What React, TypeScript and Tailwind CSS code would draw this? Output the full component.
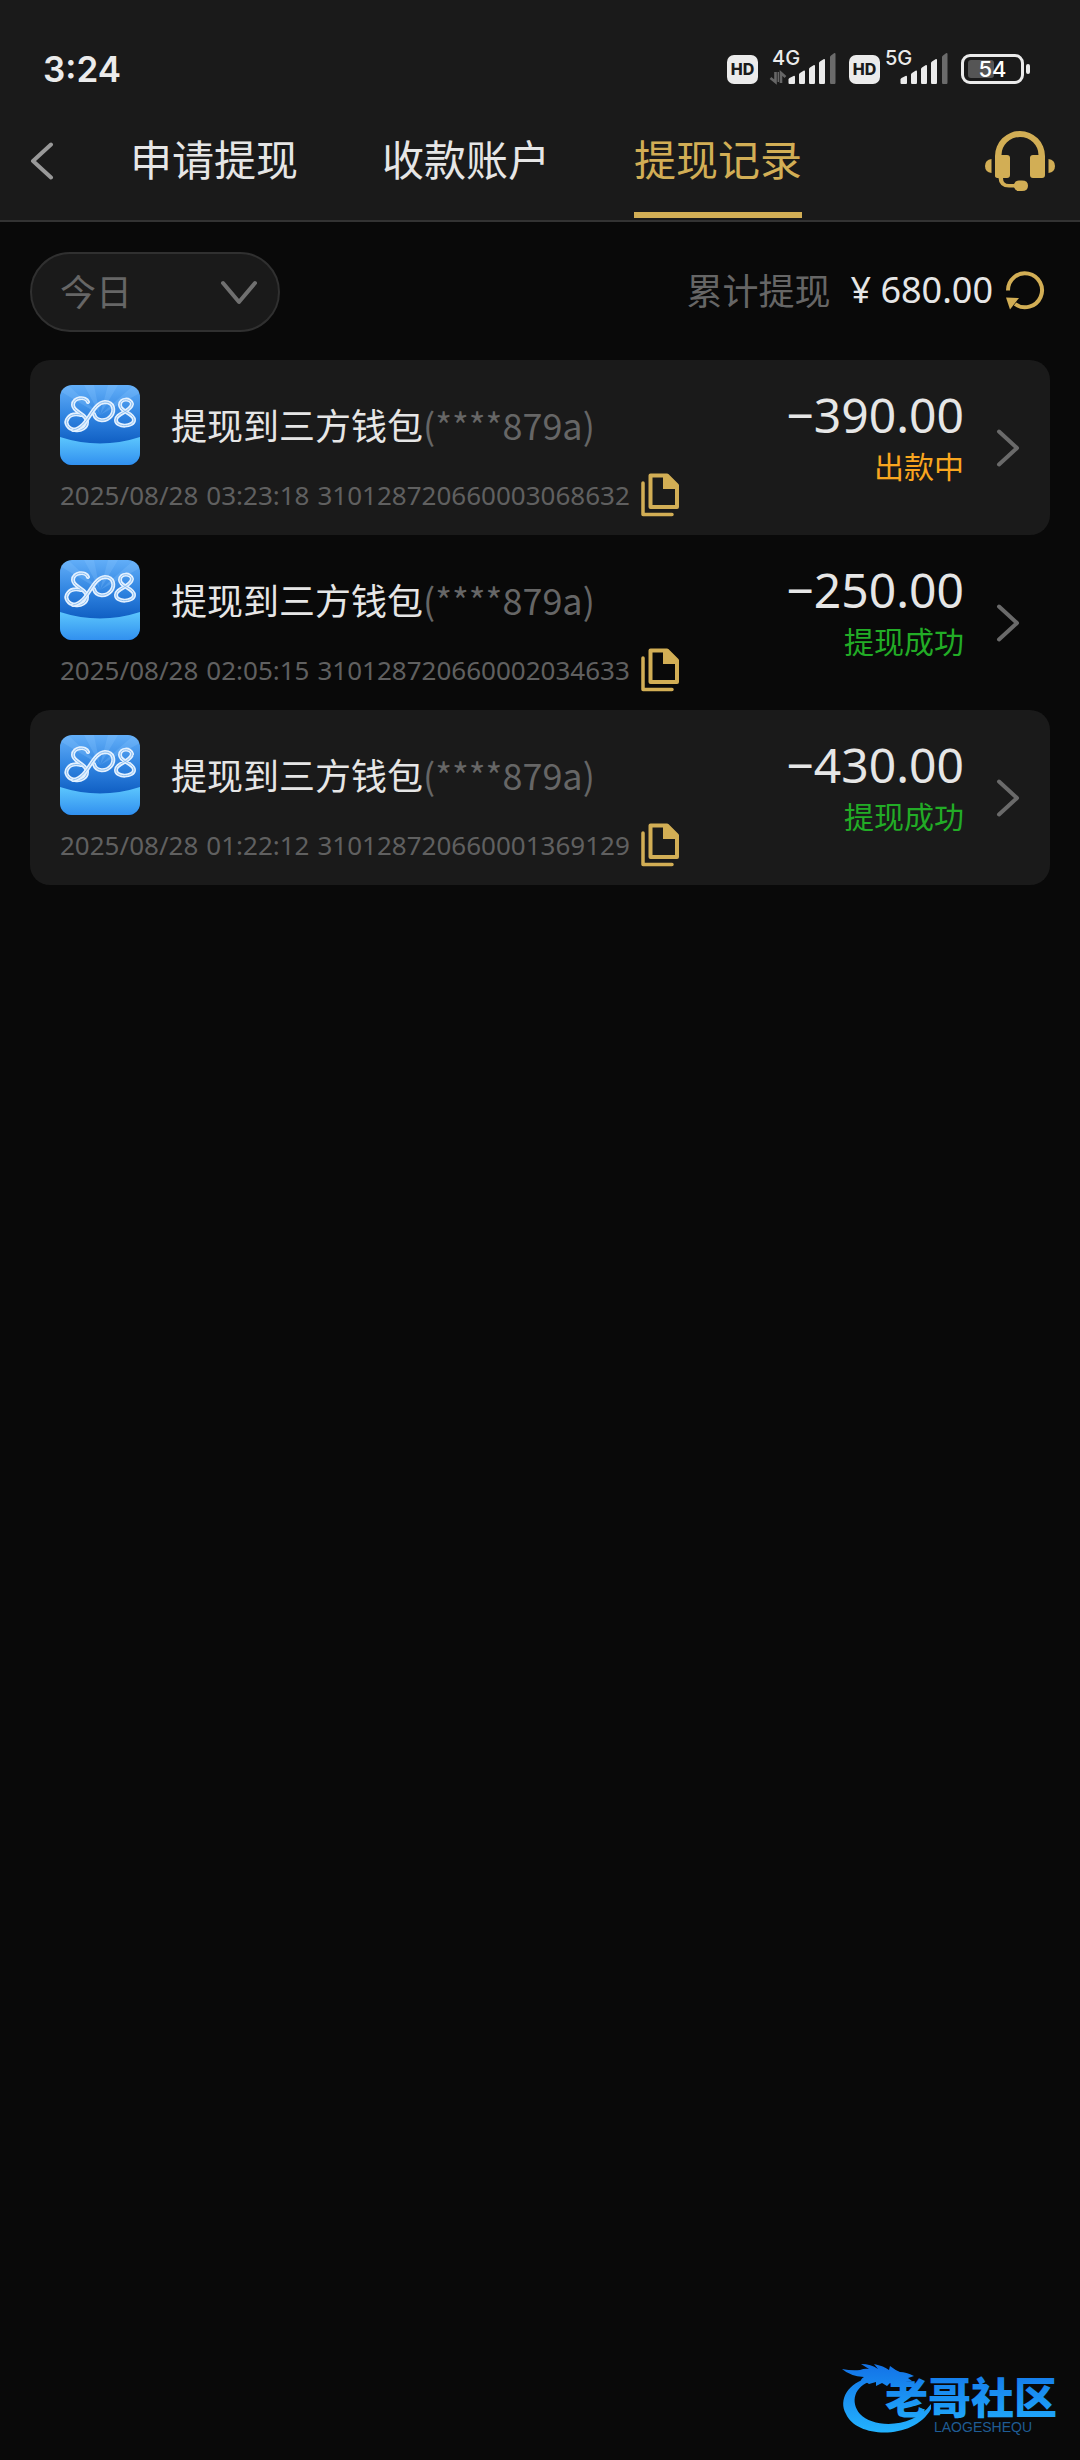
import { useState } from "react";

const cjk = "font-['Noto_Sans_CJK_SC',sans-serif]";
const latin = "font-['Noto_Sans','Noto_Sans_CJK_SC',sans-serif]";

type RecordItem = {
  date: string;
  time: string;
  order: string;
  amount: string;
  status: string;
  pending: boolean;
};

const records: RecordItem[] = [
  { date: "2025/08/28", time: "03:23:18", order: "310128720660003068632", amount: "−390.00", status: "出款中", pending: true },
  { date: "2025/08/28", time: "02:05:15", order: "310128720660002034633", amount: "−250.00", status: "提现成功", pending: false },
  { date: "2025/08/28", time: "01:22:12", order: "310128720660001369129", amount: "−430.00", status: "提现成功", pending: false },
];

const tabs = ["申请提现", "收款账户", "提现记录"];

function HdBadge() {
  return (
    <span className="flex h-[29px] w-[31px] items-center justify-center rounded-[7px] bg-[#ebebeb] font-[Inter,sans-serif] text-[16px] font-extrabold text-[#1a1a1a]">
      HD
    </span>
  );
}

function Signal({ label, arrows }: { label: string; arrows?: boolean }) {
  return (
    <svg className="overflow-visible" width="67" height="36" viewBox="0 0 67 36" aria-label={label}>
      <text x={arrows ? 2 : 3} y="17" fill="#ebebeb" fontSize="20" fontWeight="500" fontFamily="Inter, sans-serif">
        {label}
      </text>
      {arrows && (
        <g stroke="#666" strokeWidth="2.6" fill="none">
          <path d="M5.5 24v10L0.5 30M11 35V25l4.5 4" />
          <path d="M8.3 24v10" strokeWidth="1.5" />
        </g>
      )}
      <g fill="#ebebeb">
        <path d="M18.500 34.500v-3q0-1 1-1.500l4-2q1.500-.6 1.500 1v6q0 1-1 1h-4.500q-1 0-1-1z" />
        <path d="M29 34.500v-8q0-1 1-1.600l3.500-2.200q1.500-.8 1.500 1V34.500q0 1.500-1 1.500h-4q-1 0-1-1.500z" />
        <path d="M39 34.500V21q0-1 1-1.600l3.500-2.200q1.500-.8 1.500 1V34.500q0 1.500-1 1.500h-4q-1 0-1-1.500z" />
        <path d="M49 34.500V15q0-1 1-1.600l3.500-2.200q1.500-.8 1.500 1V34.500q0 1.500-1 1.500h-4q-1 0-1-1.500z" />
      </g>
      <path fill="#6b6b6b" d="M60 34.500V9q0-1 1-1.600l3-2.200q1.500-.8 1.500 1V34.500q0 1.500-1 1.500H61q-1 0-1-1.500z" />
    </svg>
  );
}

function Battery() {
  return (
    <div className="flex items-center gap-[2px]">
      <div className="relative flex h-[30px] w-[63px] items-center justify-center rounded-[9px] border-[3px] border-[#ebebeb]">
        <span className="absolute left-[4px] h-[18px] w-[26px] rounded-[3px] bg-[#555]" />
        <span className="relative font-[Inter,sans-serif] text-[22px] leading-[24px] font-medium text-white">54</span>
      </div>
      <span className="h-[10px] w-[4px] rounded-full bg-[#ebebeb]" />
    </div>
  );
}

function Headset() {
  return (
    <svg width="70" height="60" viewBox="0 0 70 60" fill="#d2ae55" aria-hidden="true">
      <path d="M10 45V25a25 25 0 0 1 50 0v19q0 3-3 3H48q-3 0-3-3V27q0-3 3-3h5.500a18.500 18 0 0 0-37 0H22q3 0 3 3v17q0 3-3 3h-4q0 6 6 6h5q1.500-3.500 5-3.500h3q6 0 6 5.200T37 60h-3q-3.500 0-5-3.500h-5Q14 56.500 13.500 47 10 47 10 45z" />
      <path d="M6.500 28v14Q0 41 0 35t6.500-7zM63.500 28v14Q70 41 70 35t-6.500-7z" />
    </svg>
  );
}

function Refresh() {
  return (
    <svg width="40" height="40" viewBox="0 0 40 40" aria-hidden="true">
      <path d="M3 20.500A17 17 0 1 1 10 34" fill="none" stroke="#d2ae55" strokeWidth="4" />
      <path d="M1 27.500l13 .5-9 11.500z" fill="#d2ae55" />
    </svg>
  );
}

function CopyIcon() {
  return (
    <svg width="40" height="44" viewBox="0 0 40 44" aria-hidden="true">
      <path d="M3 10v31.500h29" fill="none" stroke="#d2ae55" strokeWidth="3.500" strokeLinecap="round" strokeLinejoin="round" />
      <path d="M10.500 2.500H27l10 10V34H10.500z" fill="none" stroke="#d2ae55" strokeWidth="4" strokeLinejoin="round" />
      <path d="M23 2h5l10 11v3H23z" fill="#d2ae55" />
    </svg>
  );
}

function Chevron({ left }: { left?: boolean }) {
  return (
    <svg width="24" height="38" viewBox="0 0 24 38" fill="none" aria-hidden="true">
      <path
        d={left ? "M21 2.500L3 19l18 16.500" : "M3 2.500L21 19 3 35.500"}
        stroke={left ? "#999" : "#6a6a6a"}
        strokeWidth="4"
        strokeLinecap="round"
        strokeLinejoin="round"
      />
    </svg>
  );
}

const ribbons = [
  "M28 17C26 11 13 12 13 20C13 27 27 29 27 37C27 43 21 46 15 45C8 44 4 38 8 33C11 29 17 29 21 30",
  "M13 45C29 43 31 18 45 17C54 17 55 26 51 31C46 37 36 37 34 29",
  "M72 19C71 13 60 13 60 20C60 27 74 28 74 35C74 42 56 43 56 35C56 28 71 27 72 19",
];

function WalletLogo() {
  return (
    <svg className="shrink-0 rounded-[12px]" width="80" height="80" viewBox="0 0 80 80" aria-label="808">
      <defs>
        <linearGradient id="sky" x1="0" y1="0" x2="0" y2="1">
          <stop offset="0" stopColor="#62aef8" />
          <stop offset=".4" stopColor="#2f83e0" />
          <stop offset=".72" stopColor="#1160c4" />
        </linearGradient>
        <linearGradient id="sea" x1="0" y1="0" x2="0" y2="1">
          <stop offset="0" stopColor="#5cc6fd" />
          <stop offset="1" stopColor="#3190ef" />
        </linearGradient>
      </defs>
      <rect width="80" height="80" fill="url(#sky)" />
      <path d="M40 30L0 6V0h8zM40 30L24 0h10zM40 30L48 0h10zM40 30L74 0h6v8z" fill="#8cc6ff" opacity=".25" />
      <path d="M0 52q40 13 80 0v28H0z" fill="url(#sea)" />
      <g fill="none" strokeLinecap="round">
        {ribbons.map((d) => (
          <g key={d}>
            <path d={d} stroke="#e4f1ff" strokeWidth="4" />
            <path d={d} stroke="#8dbff0" strokeWidth="1" />
          </g>
        ))}
      </g>
    </svg>
  );
}

function Record({ item, shaded }: { item: RecordItem; shaded: boolean }) {
  return (
    <li className={`flex rounded-[20px] px-[30px] pt-[25px] pb-[18px] ${shaded ? "bg-[#1a1a1a]" : ""}`}>
      <div className="flex flex-1 flex-col gap-[8px]">
        <div className="flex items-center gap-[31px]">
          <WalletLogo />
          <h2 className={`pb-[3px] text-[36px] leading-[48px] text-[#e6e6e6] ${cjk}`}>
            提现到三方钱包<span className="text-[#666]">(****879a)</span>
          </h2>
        </div>
        <div className="flex h-[44px] items-center gap-[10px]">
          <p className={`flex gap-[8px] text-[26px] leading-[36px] whitespace-nowrap text-[#606060] ${latin}`}>
            <span>{item.date}</span>
            <span>{item.time}</span>
            <span>{item.order}</span>
          </p>
          <button type="button" aria-label="复制订单号">
            <CopyIcon />
          </button>
        </div>
      </div>
      <div className="flex flex-col items-end">
        <strong className={`text-[48px] leading-[60px] font-normal text-[#e6e6e6] ${latin}`}>{item.amount}</strong>
        <span className={`text-[30px] leading-[40px] ${cjk} ${item.pending ? "text-[#f9a61f]" : "text-[#22ac26]"}`}>
          {item.status}
        </span>
      </div>
      <button type="button" aria-label="查看详情" className="ml-[32px] h-[125px] self-start">
        <Chevron />
      </button>
    </li>
  );
}

function Watermark() {
  return (
    <svg className="overflow-visible" width="226" height="76" viewBox="0 0 226 76" aria-label="老哥社区 LAOGESHEQU">
      <defs>
        <linearGradient id="brand" gradientUnits="userSpaceOnUse" x1="0" y1="6" x2="0" y2="74">
          <stop offset="0" stopColor="#1374e8" />
          <stop offset="1" stopColor="#23b4ff" />
        </linearGradient>
      </defs>
      <g fill="url(#brand)">
        <path d="M30 18C8 22 -2 40 6 54C17 79 74 80 91 49V44C74 68 34 69 20 54C10 42 14 26 32 21z" />
        <path d="M2 9q10 2 18 1 5-2 9-1l-8-5q10 0 17 5l-4-5q10 2 15 6l1-4q5 4 10 6 6 0 14 4l-6 2 4 3-12 1 9 2-7 3-12-4-3 3-5-3-6 3v-4l-7 2-3-2q-4 0-6 3 0-6 4-8Q10 16 2 9z" />
        <text x="45" y="54" fontSize="43" fontWeight="900" fontFamily="'Noto Sans CJK SC', sans-serif">
          老哥社区
        </text>
      </g>
      <text x="94" y="72" fontSize="14" fill="#1f5c94" fontFamily="'Liberation Sans', sans-serif">
        LAOGESHEQU
      </text>
    </svg>
  );
}

export default function App() {
  const [active, setActive] = useState(2);
  return (
    <div className="flex min-h-screen flex-col bg-[#090909]">
      <header className="border-b-2 border-[#333] bg-[#1a1a1a]">
        <div className="flex h-[102px] items-center justify-between pt-[36px] pr-[50px] pl-[43px]">
          <span className="font-[Inter,sans-serif] text-[35px] font-semibold text-[#ebebeb]">3:24</span>
          <div className="flex items-center gap-[12px]">
            <HdBadge />
            <div className="-mt-[6px] flex">
              <Signal label="4G" arrows />
            </div>
            <HdBadge />
            <div className="-mt-[6px] -ml-[10px] flex">
              <Signal label="5G" />
            </div>
            <Battery />
          </div>
        </div>
        <nav className="flex h-[118px]">
          <button type="button" aria-label="返回" className="w-[130px] pl-[30px]">
            <Chevron left />
          </button>
          <div className="flex gap-[84px]" role="tablist">
            {tabs.map((tab, i) => (
              <button
                key={tab}
                type="button"
                role="tab"
                aria-selected={active === i}
                onClick={() => setActive(i)}
                className={`h-[116px] border-b-[6px] text-[42px] whitespace-nowrap ${cjk} ${
                  active === i ? "border-[#d2ae55] text-[#d2ae55]" : "border-transparent text-[#e6e6e6]"
                }`}
              >
                {tab}
              </button>
            ))}
          </div>
          <button type="button" aria-label="客服" className="mr-[25px] ml-auto">
            <Headset />
          </button>
        </nav>
      </header>

      <main className="flex-1 px-[30px] pt-[30px]">
        <div className="mb-[28px] flex items-center justify-between pr-[5px]">
          <div className="relative">
            <select
              aria-label="日期"
              className={`h-[80px] w-[250px] appearance-none rounded-full border-2 border-[#303030] bg-[#1a1a1a] pb-[4px] pl-[28px] text-[36px] text-[#666] ${cjk}`}
            >
              <option>今日</option>
            </select>
            <svg
              className="pointer-events-none absolute top-[28px] right-[22px]"
              width="38"
              height="26"
              viewBox="0 0 38 26"
              fill="none"
              aria-hidden="true"
            >
              <path d="M3 3l16 19L35 3" stroke="#707070" strokeWidth="4" strokeLinecap="round" strokeLinejoin="round" />
            </svg>
          </div>
          <div className="flex items-center pb-[4px] text-[36px] leading-[48px]">
            <span className={`mr-[20px] pb-[2px] text-[#666] ${cjk}`}>累计提现</span>
            <span className={`mr-[12px] text-[#e6e6e6] ${latin}`}>¥ 680.00</span>
            <button type="button" aria-label="刷新">
              <Refresh />
            </button>
          </div>
        </div>
        <ul>
          {records.map((item, i) => (
            <Record key={item.order} item={item} shaded={i % 2 === 0} />
          ))}
        </ul>
      </main>

      <footer className="flex justify-end pr-[14px] pb-[24px]">
        <Watermark />
      </footer>
    </div>
  );
}
